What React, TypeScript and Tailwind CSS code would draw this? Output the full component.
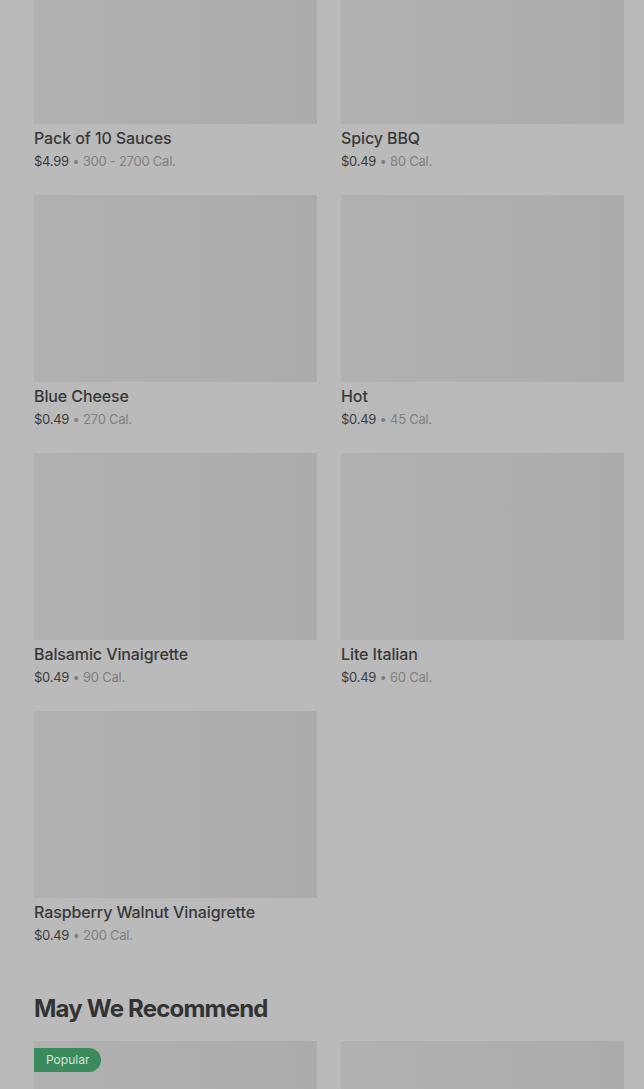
import React from "react";

type Item = { name: string; price: string; cal: string };

const items: Item[] = [
  { name: "Pack of 10 Sauces", price: "$4.99", cal: "300 - 2700 Cal." },
  { name: "Spicy BBQ", price: "$0.49", cal: "80 Cal." },
  { name: "Blue Cheese", price: "$0.49", cal: "270 Cal." },
  { name: "Hot", price: "$0.49", cal: "45 Cal." },
  { name: "Balsamic Vinaigrette", price: "$0.49", cal: "90 Cal." },
  { name: "Lite Italian", price: "$0.49", cal: "60 Cal." },
  { name: "Raspberry Walnut Vinaigrette", price: "$0.49", cal: "200 Cal." },
];

const ItemCard: React.FC<{ item: Item }> = ({ item }) => (
  <div className="flex flex-col">
    <div className="h-[187px] w-full bg-gradient-to-r from-[#b1b1b1] to-[#ababab]" />
    <div className="pt-[4px] text-[16px] leading-[20px] font-medium tracking-[-0.1px] text-[#383838]">
      {item.name}
    </div>
    <div className="pt-[4px] text-[13px] leading-[18px] tracking-[-0.25px] text-[#3c3c3c]">
      {item.price}
      <span className="text-[#808080]"> • {item.cal}</span>
    </div>
  </div>
);

const App: React.FC = () => {
  return (
    <div
      className="w-[644px] h-[1089px] overflow-hidden bg-[#bababa]"
      style={{ fontFamily: "Inter, 'Noto Sans', sans-serif" }}
    >
      <div className="mt-[-63px] pl-[34px] pr-[20px]">
        <div className="grid grid-cols-2 gap-x-[24px] gap-y-[25px]">
          {items.map((item) => (
            <ItemCard key={item.name} item={item} />
          ))}
        </div>
        <h2 className="mt-[50px] text-[24px] leading-[30px] font-bold tracking-[-0.8px] text-[#333333]">
          May We Recommend
        </h2>
        <div className="mt-[17px] grid grid-cols-2 gap-x-[24px]">
          <div className="relative h-[187px] bg-gradient-to-r from-[#b1b1b1] to-[#ababab]">
            <span className="absolute left-0 top-[7px] rounded-r-full bg-[#3b8a5e] pl-[12px] pr-[12px] text-[12px] leading-[24px] text-[#d4e4d9]">
              Popular
            </span>
          </div>
          <div className="h-[187px] bg-gradient-to-r from-[#b1b1b1] to-[#ababab]" />
        </div>
      </div>
    </div>
  );
};

export default App;
